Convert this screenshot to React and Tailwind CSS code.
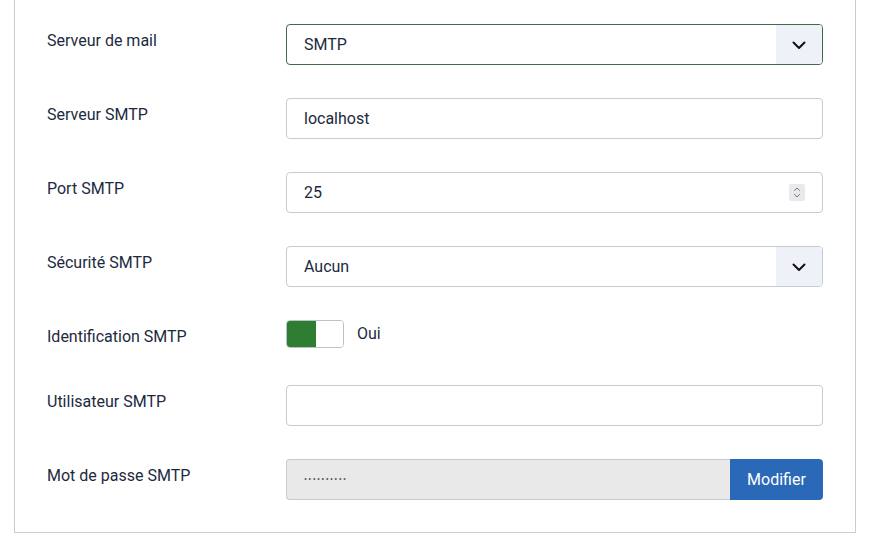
const font = { fontFamily: 'Roboto, "Noto Sans", sans-serif' };

function Chevron() {
  return (
    <svg width="16" height="16" viewBox="0 0 16 16" fill="none" stroke="#111" strokeWidth="2" strokeLinecap="round" strokeLinejoin="round">
      <path d="M2.5 5.5 8 11l5.5-5.5" />
    </svg>
  );
}

function Row({ label, children, rowClass = 'h-[41px] mb-[33px]' }) {
  return (
    <div className={`flex ${rowClass}`}>
      <div className="w-[239px] shrink-0 pt-[5px] text-[16px] leading-[24px] text-[#1c2a40]">{label}</div>
      <div className="flex-1">{children}</div>
    </div>
  );
}

function Select({ value, focused }) {
  return (
    <div className={`flex h-[41px] items-stretch rounded-[4px] border ${focused ? 'border-[#3f6a4b]' : 'border-[#c3cbd3]'} overflow-hidden`}>
      <div className="flex flex-1 items-center pl-[17px] text-[16px] text-[#1c2a40]">{value}</div>
      <div className="flex w-[46px] items-center justify-center bg-[#eef2f8]">
        <Chevron />
      </div>
    </div>
  );
}

function TextInput({ value }) {
  return (
    <div className="flex h-[41px] items-center rounded-[4px] border border-[#c3cbd3] pl-[17px] text-[16px] text-[#1c2a40]">
      {value}
    </div>
  );
}

function NumberInput({ value }) {
  return (
    <div className="flex h-[41px] items-center justify-between rounded-[4px] border border-[#c3cbd3] pl-[17px] pr-[17px] text-[16px] text-[#1c2a40]">
      <span>{value}</span>
      <span className="flex h-[17px] w-[16px] flex-col items-center justify-center rounded-[2px] bg-[#e9e9ed]">
        <svg width="8" height="13" viewBox="0 0 8 13" fill="none" stroke="#777" strokeWidth="1" strokeLinecap="round" strokeLinejoin="round">
          <path d="M1.5 4.5 4 2l2.5 2.5" />
          <path d="M1.5 8.5 4 11l2.5-2.5" />
        </svg>
      </span>
    </div>
  );
}

export default function App() {
  return (
    <div className="min-h-[545px] bg-white" style={font}>
      <div className="ml-[14px] w-[842px] border border-t-0 border-[#c6ced6] px-[32px] pt-[24px] pb-[32px]">
        <Row label="Serveur de mail">
          <Select value="SMTP" focused />
        </Row>
        <Row label="Serveur SMTP">
          <TextInput value="localhost" />
        </Row>
        <Row label="Port SMTP">
          <NumberInput value="25" />
        </Row>
        <Row label="Sécurité SMTP">
          <Select value="Aucun" />
        </Row>
        <Row label="Identification SMTP" rowClass="h-[32px] mb-[33px]">
          <div className="flex items-center gap-[13px]">
            <div className="flex h-[28px] w-[58px] overflow-hidden rounded-[4px] border border-[#b9c1c9]">
              <div className="w-[29px] bg-[#2e7d32]" />
              <div className="flex-1 bg-white" />
            </div>
            <span className="text-[16px] text-[#1c2a40]">Oui</span>
          </div>
        </Row>
        <Row label="Utilisateur SMTP">
          <TextInput value="" />
        </Row>
        <Row label="Mot de passe SMTP" rowClass="h-[41px]">
          <div className="flex h-[41px]">
            <div className="flex flex-1 items-center rounded-l-[4px] border border-r-0 border-[#c3cbd3] bg-[#e9e9e9] pl-[17px] text-[9px] tracking-[1.3px] text-[#555]">
              ••••••••••
            </div>
            <button className="w-[93px] rounded-r-[4px] bg-[#2a69b8] text-[16px] text-white">Modifier</button>
          </div>
        </Row>
      </div>
    </div>
  );
}
